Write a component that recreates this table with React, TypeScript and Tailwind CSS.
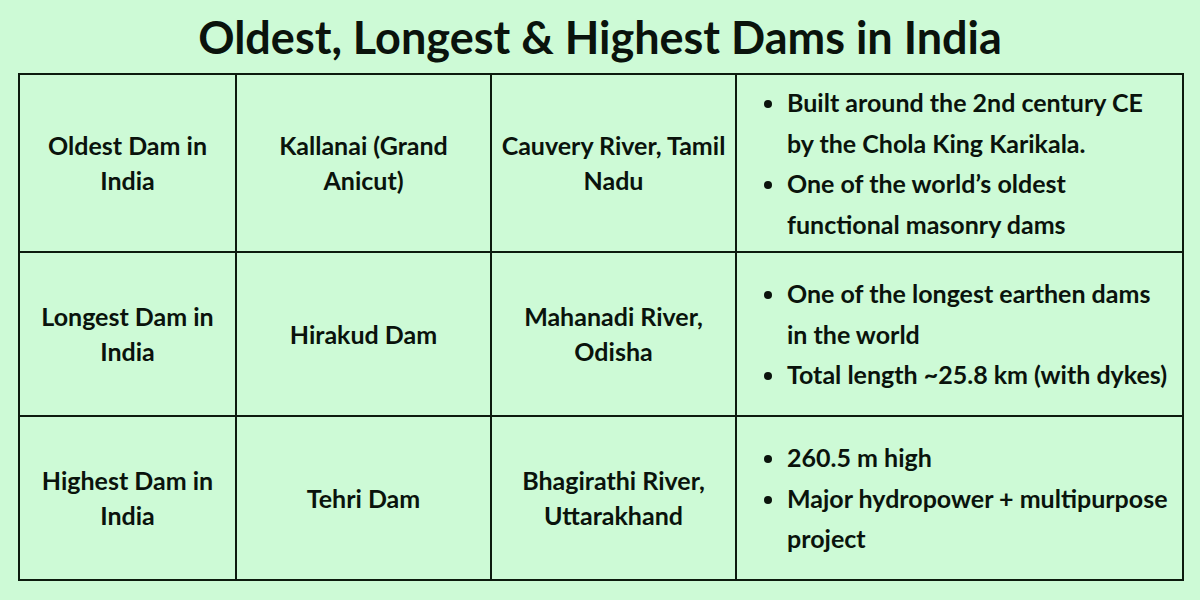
import React from "react";

const rows = [
  {
    label: ["Oldest Dam in", "India"],
    name: "Kallanai (Grand Anicut)",
    river: "Cauvery River, Tamil Nadu",
    points: [
      "Built around the 2nd century CE by the Chola King Karikala.",
      "One of the world\u2019s oldest functional masonry dams",
    ],
    h: "h-[178px]",
  },
  {
    label: ["Longest Dam in", "India"],
    name: "Hirakud Dam",
    river: "Mahanadi River, Odisha",
    points: [
      "One of the longest earthen dams in the world",
      "Total length ~25.8 km (with dykes)",
    ],
    h: "h-[164px]",
  },
  {
    label: ["Highest Dam in", "India"],
    name: "Tehri Dam",
    river: "Bhagirathi River, Uttarakhand",
    points: ["260.5 m high", "Major hydropower + multipurpose project"],
    h: "h-[164px]",
  },
];

export default function App() {
  return (
    <div
      className="w-[1200px] h-[600px] bg-[#cdfad6] text-[#0a130c] font-bold overflow-hidden"
      style={{ fontFamily: "Lato, 'Open Sans', sans-serif" }}
    >
      <h1 className="h-[73px] flex items-center justify-center text-[45px] leading-none pt-[2px] font-bold">
        Oldest, Longest &amp; Highest Dams in India
      </h1>
      <div className="px-[18px]">
        <table className="w-[1164px] border-collapse table-fixed">
          <colgroup>
            <col className="w-[217px]" />
            <col className="w-[255px]" />
            <col className="w-[245px]" />
            <col className="w-[447px]" />
          </colgroup>
          <tbody>
            {rows.map((r, i) => (
              <tr key={i} className={r.h}>
                <td className="border-2 border-[#0c1a0e] text-center align-middle text-[25px] leading-[35px] px-1">
                  {r.label[0]}
                  <br />
                  {r.label[1]}
                </td>
                <td className="border-2 border-[#0c1a0e] text-center align-middle text-[25px] leading-[35px] px-1">
                  {r.name}
                </td>
                <td className="border-2 border-[#0c1a0e] text-center align-middle text-[25px] leading-[35px] px-1">
                  {r.river}
                </td>
                <td className="border-2 border-[#0c1a0e] align-middle text-[25px] leading-[40.5px] pl-[28px] pr-[9px]">
                  <ul className="list-disc pl-[22px]">
                    {r.points.map((p, j) => (
                      <li key={j} className="pl-0">
                        {p}
                      </li>
                    ))}
                  </ul>
                </td>
              </tr>
            ))}
          </tbody>
        </table>
      </div>
    </div>
  );
}
